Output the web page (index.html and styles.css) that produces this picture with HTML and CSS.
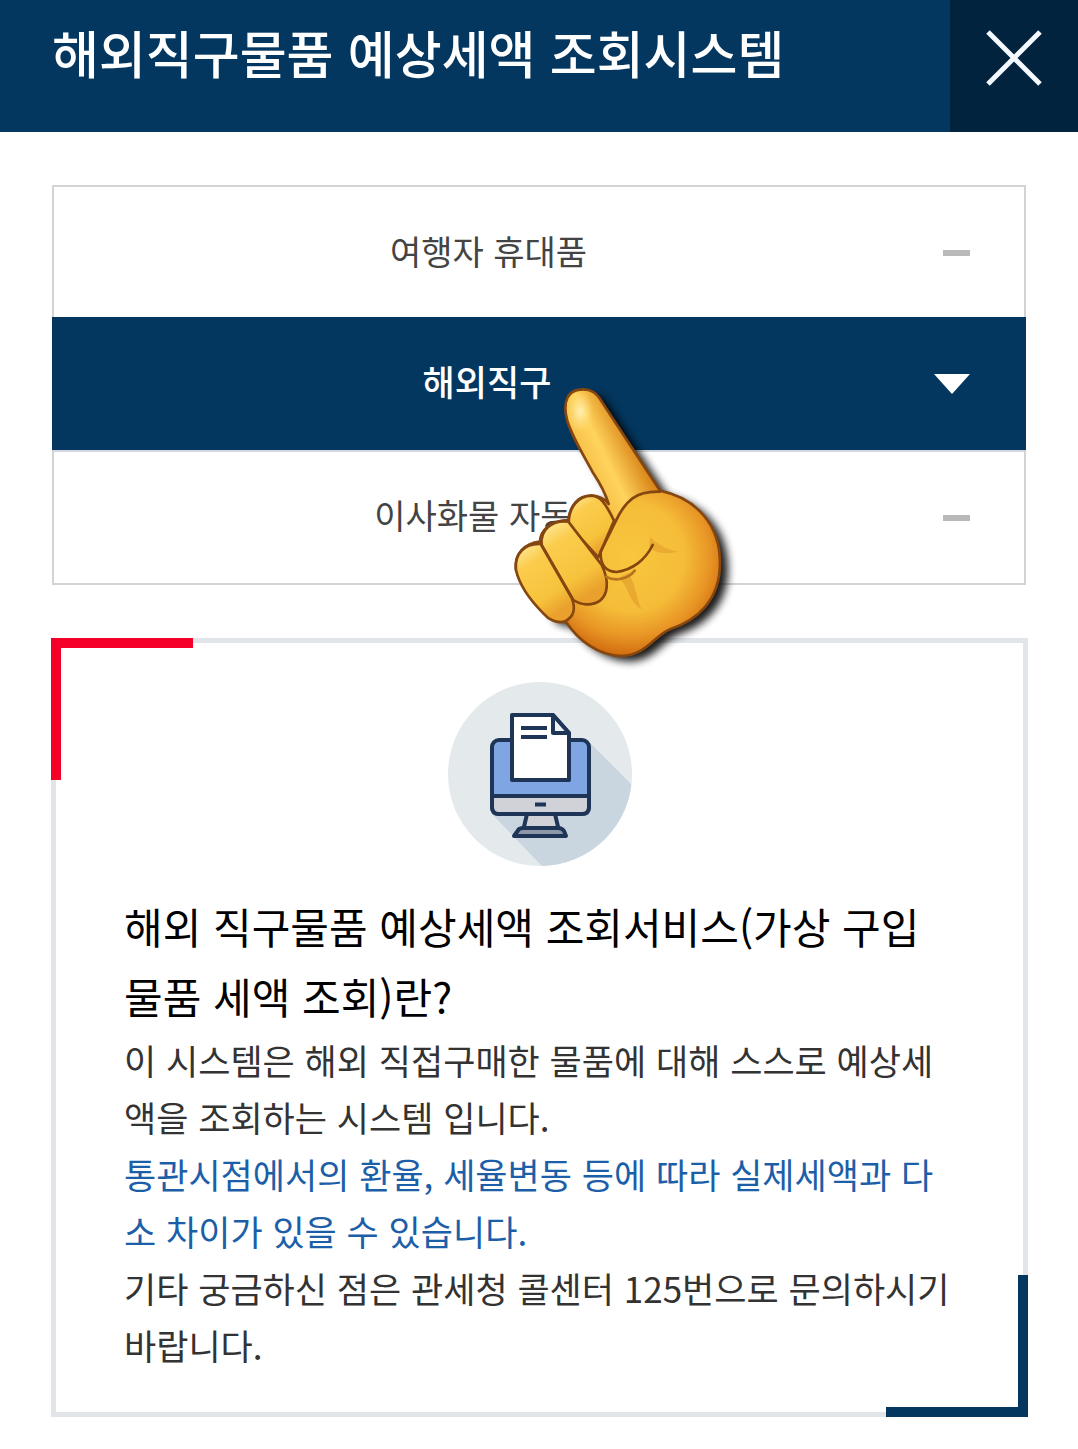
FILE: index.html
```
<!DOCTYPE html>
<html lang="ko">
  <head>
    <meta charset="utf-8">
    <meta name="viewport" content="width=device-width, initial-scale=1">
    <title>해외직구물품 예상세액 조회시스템</title>
    <link rel="stylesheet" href="styles.css">
  </head>
  <body>
    <header class="header">
      <h1 class="title">해외직구물품 예상세액 조회시스템</h1>
      <button type="button" class="close-btn" aria-label="닫기">
        <svg class="close-icon" viewBox="0 0 58 58" aria-hidden="true">
          <path d="M3 3L55 55M55 3L3 55" fill="none" stroke="#f4f9ff" stroke-width="5"/>
        </svg>
      </button>
    </header>
    <main class="content">
      <nav class="menu">
        <a class="menu-item" href="#traveler">
          <span class="menu-label">여행자 휴대품</span>
          <span class="dash"></span>
        </a>
        <a class="menu-item active" href="#direct" aria-current="page">
          <span class="menu-label">해외직구</span>
          <svg class="arrow" viewBox="0 0 36 20" aria-hidden="true"><path d="M0 0H36L18 20Z" fill="#fff"/></svg>
        </a>
        <a class="menu-item" href="#moving">
          <span class="menu-label">이사화물 자동차</span>
          <span class="dash"></span>
        </a>
        <svg class="hand" viewBox="0 0 750 900" aria-hidden="true">
          <defs>
            <linearGradient id="finger" gradientUnits="userSpaceOnUse" x1="235" y1="260" x2="380" y2="190">
              <stop offset="0" stop-color="#f6bd45"/>
              <stop offset=".45" stop-color="#ffd45c"/>
              <stop offset="1" stop-color="#dc8a1d"/>
            </linearGradient>
            <radialGradient id="palm" gradientUnits="userSpaceOnUse" cx="390" cy="560" r="300">
              <stop offset="0" stop-color="#f9c63e"/>
              <stop offset=".55" stop-color="#f5bc38"/>
              <stop offset=".8" stop-color="#e89525"/>
              <stop offset="1" stop-color="#cf6a0d"/>
            </radialGradient>
            <linearGradient id="curl" x1="0" y1="0" x2=".5" y2="1">
              <stop offset="0" stop-color="#fff0a8"/>
              <stop offset=".3" stop-color="#fbcc4d"/>
              <stop offset=".75" stop-color="#f7c33c"/>
              <stop offset="1" stop-color="#e9a02c"/>
            </linearGradient>
            <radialGradient id="tip">
              <stop offset="0" stop-color="#fff0b4"/>
              <stop offset="1" stop-color="#ffe084" stop-opacity="0"/>
            </radialGradient>
            <filter id="soft" x="-20%" y="-20%" width="140%" height="140%">
              <feGaussianBlur stdDeviation="13"/>
            </filter>
            <path id="outline" d="M200 145C188 92 205 62 240 59C272 55 290 68 306 96L480 362C590 385 660 465 660 580C660 690 593 750 510 778C462 798 440 855 365 858C290 856 232 806 200 758L150 745L48 600C42 550 75 520 120 515C120 480 155 450 205 450C210 405 235 376 275 377C300 378 315 388 326 402C316 370 300 340 280 310C245 245 210 190 200 145Z"/>
          </defs>
          <use href="#outline" class="hand-shadow" filter="url(#soft)" transform="translate(24 16)"/>
          <use href="#outline" fill="url(#palm)"/>
          <path d="M202 145C188 92 205 62 240 59C272 55 290 68 306 96L480 362C410 365 380 390 345 450L326 402C316 370 300 340 280 310C245 245 210 190 202 145Z" fill="url(#finger)"/>
          <ellipse cx="240" cy="125" rx="40" ry="64" fill="url(#tip)"/>
          <path d="M450 500C480 530 510 540 535 545C495 553 465 550 448 530Z" fill="#e09a2b" opacity=".55"/>
          <path d="M385 608C408 645 410 690 425 718C380 690 390 650 355 625Z" fill="#dc9428" opacity=".5"/>
          <g class="hand-line">
            <use href="#outline" fill="none"/>
            <path d="M206 465C205 410 235 378 275 377C300 378 315 396 342 452L295 562Z" fill="url(#curl)"/>
            <path d="M125 525C120 480 155 450 205 455L305 585C330 635 322 675 300 692C275 710 240 704 220 690Z" fill="url(#curl)"/>
            <path d="M48 600C42 550 75 520 122 522L214 682C230 718 219 742 195 754C170 762 145 748 130 730C90 690 58 645 48 600Z" fill="url(#curl)"/>
            <path d="M480 365C410 362 377 390 348 452L302 545C300 590 322 605 350 606C395 600 435 572 458 525" fill="none"/>
            <path d="M318 620C345 636 385 627 404 602" fill="none" class="fold"/>
          </g>
        </svg>
      </nav>
      <section class="card">
        <svg class="card-icon" viewBox="0 0 184 184" aria-hidden="true">
          <defs>
            <clipPath id="circle"><circle cx="92" cy="92" r="92"/></clipPath>
          </defs>
          <g clip-path="url(#circle)">
            <rect width="184" height="184" fill="#e4e9ec"/>
            <path d="M141 60L220 139V230H138L44 132Z" fill="#c9d6e0"/>
          </g>
          <g stroke="#1f3557" stroke-width="4" stroke-linejoin="round">
            <path d="M79 132H107L111 149H75Z" fill="#d0d2d8"/>
            <path d="M66 154L71 147Q73 146 76 146H110Q114 146 116 149L118 154Z" fill="#8e98a8"/>
            <rect x="44" y="58" width="97" height="74" rx="7" fill="#7fa6e2"/>
            <path d="M44 114H141V125Q141 132 134 132H51Q44 132 44 125Z" fill="#d0d2d8"/>
            <path d="M87 122.500H98" fill="none"/>
            <path d="M64 33H105L121 51V98H64Z" fill="#fff"/>
            <path d="M105 33V51H121Z" fill="#eef2f7"/>
            <path d="M73 46H99M73 55H99" fill="none"/>
          </g>
        </svg>
        <h2 class="card-title">해외 직구물품 예상세액 조회서비스(가상 구입물품 세액 조회)란?</h2>
        <p class="card-text">이 시스템은 해외 직접구매한 물품에 대해 스스로 예상세액을 조회하는 시스템 입니다.</p>
        <p class="card-text notice">통관시점에서의 환율, 세율변동 등에 따라 실제세액과 다소 차이가 있을 수 있습니다.</p>
        <p class="card-text">기타 궁금하신 점은 관세청 콜센터 125번으로 문의하시기 바랍니다.</p>
      </section>
    </main>
  </body>
</html>
```
FILE: styles.css
```
* {
  box-sizing: border-box;
}
body {
  margin: 0;
  background: #fff;
  color: #333;
  font-family: "Noto Sans CJK KR", sans-serif;
}
/* Header */
.header {
  display: flex;
  height: 132px;
  background: #04375f;
}
.title {
  flex: 1;
  margin: 0;
  padding: 15px 52px 0;
  color: #fff;
  font-size: 51px;
  font-weight: 500;
  line-height: 74px;
}
.close-btn {
  display: flex;
  justify-content: center;
  width: 128px;
  padding: 29px 0 0;
  border: 0;
  background: #02233e;
}
.close-icon {
  width: 58px;
  height: 58px;
}
.content {
  padding: 53px 50px 32px 51px;
}
/* Menu */
.menu {
  position: relative;
  margin: 0 2px 53px 1px;
  border: 2px solid #d3d3d3;
}
.menu-item {
  display: flex;
  align-items: center;
  height: 132px;
  padding-right: 54px;
  color: #444;
  font-size: 34px;
  text-decoration: none;
}
.menu-item + .menu-item {
  height: 133px;
  border-top: 2px solid #d3d8e0;
}
.menu-label {
  flex: 1;
  padding-bottom: 6px;
  text-align: center;
}
.menu .menu-item.active {
  margin: -2px -2px 0;
  padding-right: 56px;
  border-top: 0;
  background: #04375f;
  color: #fff;
  font-size: 35px;
  font-weight: 500;
}
.dash {
  width: 27px;
  height: 6px;
  margin-left: 20px;
  background: #b9b9b9;
}
.arrow {
  width: 36px;
  height: 20px;
  margin-left: 12px;
}
.hand {
  position: absolute;
  top: 183px;
  left: calc(50% - 39px);
  z-index: 1;
  width: 250px;
  height: 300px;
  overflow: visible;
  pointer-events: none;
}
.hand-shadow {
  fill: #000;
  opacity: 0.9;
}
.hand-line {
  stroke: #85460f;
  stroke-width: 8;
  stroke-linejoin: round;
  stroke-linecap: round;
}
.fold {
  stroke: #b8741d;
}
/* Card */
.card {
  position: relative;
  padding: 39px 68px;
  border: 5px solid #e1e5ea;
}
.card::before,
.card::after {
  content: "";
  position: absolute;
  box-sizing: border-box;
  width: 142px;
  height: 142px;
}
.card::before {
  top: -5px;
  left: -5px;
  border-top: 10px solid #f50028;
  border-left: 10px solid #f50028;
}
.card::after {
  right: -5px;
  bottom: -5px;
  border-right: 10px solid #04375f;
  border-bottom: 10px solid #04375f;
}
.card-icon {
  display: block;
  width: 184px;
  height: 184px;
  margin: 0 auto 25px;
}
.card-title {
  margin: 0;
  color: #000;
  font-size: 42px;
  font-weight: 400;
  line-height: 70px;
}
.card-text {
  margin: 0;
  font-size: 35px;
  line-height: 57px;
}
.notice {
  color: #1c5fa8;
}
```
